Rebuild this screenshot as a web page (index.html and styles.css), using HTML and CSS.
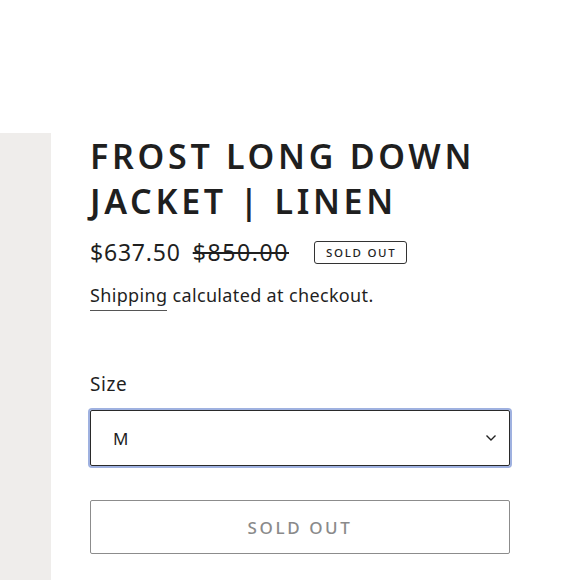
FILE: index.html
```html
<!DOCTYPE html>
<html lang="en">
<head>
<meta charset="utf-8">
<title>Frost Long Down Jacket | Linen</title>
<link rel="stylesheet" href="styles.css">
</head>
<body>
<div class="page">
  <div class="media"></div>
  <div class="info">
    <h1 class="title">FROST LONG DOWN<br>JACKET | LINEN</h1>
    <div class="price-row">
      <span class="price">$637.50</span>
      <s class="compare">$850.00</s>
      <span class="badge">SOLD OUT</span>
    </div>
    <p class="shipping"><a class="ship-link" href="#">Shipping</a> calculated at checkout.</p>
    <div class="field">
      <label class="field-label">Size</label>
      <div class="select">
        <span class="select-value">M</span>
        <svg class="chev" width="12" height="8" viewBox="0 0 12 8"><path d="M1.5 1.5 6 6l4.5-4.5" fill="none" stroke="#222" stroke-width="1.4"/></svg>
      </div>
    </div>
    <button class="sold-btn" type="button">SOLD OUT</button>
  </div>
</div>
</body>
</html>
```
FILE: styles.css
```css
html, body { margin: 0; padding: 0; background: #fff; }
body { font-family: "Noto Sans", "Open Sans", sans-serif; color: #1f1f1f; }
.page { display: flex; height: 580px; overflow: hidden; }
.media { width: 51px; margin-top: 133px; background: #efedeb; flex: none; }
.info { width: 420px; margin-left: 39px; padding-top: 134px; }
.title { margin: 0; font-size: 34px; line-height: 45px; font-weight: 600; letter-spacing: 3.7px; color: #1f1f1f; }
.price-row { display: flex; align-items: center; margin-top: 13px; height: 30px; }
.price { font-size: 23px; letter-spacing: 0.8px; }
.compare { font-size: 23px; margin-left: 12px; letter-spacing: 1.6px; }
.badge { margin-left: 25px; border: 1px solid #333; border-radius: 3px; font-size: 11.5px; letter-spacing: 1.7px; padding: 4px 10px 4px 11px; line-height: 13px; font-weight: 500; }
.shipping { margin: 16px 0 0; font-size: 18px; line-height: 24px; letter-spacing: 0.35px; }
.ship-link { color: #1f1f1f; text-decoration: none; border-bottom: 1.5px solid #555; padding-bottom: 3px; }
.field { margin-top: 65px; }
.field-label { display: block; font-size: 19px; line-height: 24px; letter-spacing: 0.6px; }
.select { margin-top: 14px; height: 54px; border: 1px solid #2a2a2a; border-radius: 2px; box-shadow: 0 0 0 2px #9fb1e0; display: flex; align-items: center; justify-content: space-between; padding: 0 12px 0 22px; }
.select-value { font-size: 17px; }
.chev { display: block; }
.sold-btn { display: block; width: 420px; margin-top: 34px; height: 54px; background: #fff; border: 1px solid #8c8c8c; border-radius: 2px; font-family: inherit; font-size: 17px; letter-spacing: 2.6px; color: #8a8a8a; font-weight: 500; }
```
